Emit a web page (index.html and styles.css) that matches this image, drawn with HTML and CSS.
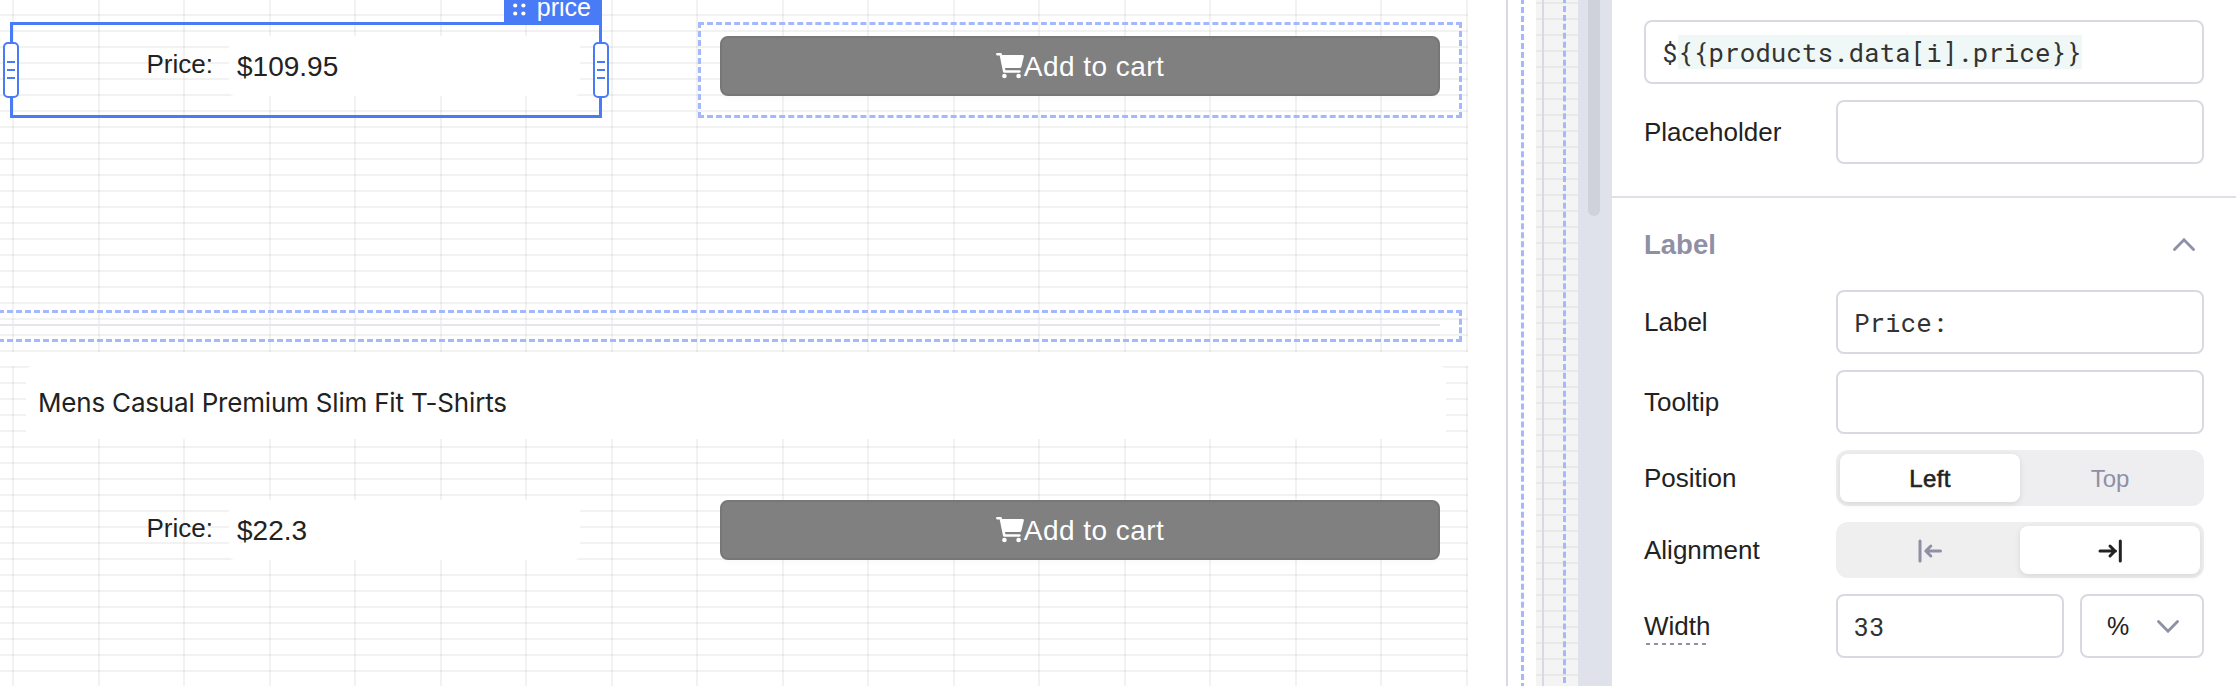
FILE: index.html
```html
<!DOCTYPE html>
<html lang="en">
<head>
<meta charset="utf-8">
<title>Editor</title>
<link rel="stylesheet" href="styles.css">
</head>
<body>
<div class="app">
  <main class="canvas">
    <div class="list">
      <section class="item item-a">
        <div class="widget selected">
          <span class="tag"><svg width="13" height="13" viewBox="0 0 13 13"><g fill="#fff"><circle cx="2.2" cy="2.5" r="2.1"/><circle cx="10.4" cy="2.5" r="2.1"/><circle cx="2.2" cy="10.5" r="2.1"/><circle cx="10.4" cy="10.5" r="2.1"/></g></svg><span>price</span></span>
          <span class="handle left"><i></i><i></i><i></i></span>
          <span class="handle right"><i></i><i></i><i></i></span>
          <span class="field-label">Price:</span>
          <span class="field-value">$109.95</span>
        </div>
        <div class="widget outlined">
          <button class="cart"><svg width="28" height="26" viewBox="0 0 28 26"><path fill="#fff" d="M1.2 0H4.6Q5.8 0 6 1.3L6.2 2H26.6Q28.2 2 27.8 3.7L25.4 13.7Q25.1 15 23.7 15H9L9.4 17.3H23.6Q24.8 17.5 24.8 18.6T23.6 19.8H8.2Q7.2 19.8 7 18.7L3.7 2.5H1.2Q0 2.3 0 1.2T1.2 0Z"/><circle cx="8.4" cy="23" r="2.3" fill="#fff"/><circle cx="22.6" cy="23" r="2.3" fill="#fff"/></svg><span>Add to cart</span></button>
        </div>
        <div class="rule"><div class="rule-line"></div></div>
      </section>
      <section class="item item-b">
        <div class="text-widget">Mens Casual Premium Slim Fit T-Shirts</div>
        <div class="item-row">
          <div class="widget plain">
            <span class="field-label">Price:</span>
            <span class="field-value">$22.3</span>
          </div>
          <div class="widget plain-button">
            <button class="cart"><svg width="28" height="26" viewBox="0 0 28 26"><path fill="#fff" d="M1.2 0H4.6Q5.8 0 6 1.3L6.2 2H26.6Q28.2 2 27.8 3.7L25.4 13.7Q25.1 15 23.7 15H9L9.4 17.3H23.6Q24.8 17.5 24.8 18.6T23.6 19.8H8.2Q7.2 19.8 7 18.7L3.7 2.5H1.2Q0 2.3 0 1.2T1.2 0Z"/><circle cx="8.4" cy="23" r="2.3" fill="#fff"/><circle cx="22.6" cy="23" r="2.3" fill="#fff"/></svg><span>Add to cart</span></button>
          </div>
        </div>
      </section>
    </div>
    <div class="list-edge"></div>
    <div class="page-edge"></div>
    <div class="gutter"><div class="thumb"></div></div>
  </main>
  <aside class="panel">
    <section class="group first">
      <div class="cut-label">Default value</div>
      <div class="input code">$<mark>{{products.data[i].price}}</mark></div>
      <div class="row"><label>Placeholder</label><div class="input"></div></div>
    </section>
    <section class="group">
      <header class="head"><h2>Label</h2><svg width="22" height="13" viewBox="0 0 22 13"><path d="M1.5 11.5L11 1.8L20.5 11.5" fill="none" stroke="#8f90a6" stroke-width="2.8" stroke-linecap="round"/></svg></header>
      <div class="row"><label>Label</label><div class="input code">Price:</div></div>
      <div class="row"><label>Tooltip</label><div class="input"></div></div>
      <div class="row"><label>Position</label><div class="segment"><span class="on">Left</span><span>Top</span></div></div>
      <div class="row"><label>Alignment</label><div class="segment neutral"><span><svg width="24" height="24" viewBox="0 0 24 24"><path d="M2 2V22M22.5 12H8M12.8 7L7.8 12L12.8 17" fill="none" stroke="#8f90a6" stroke-width="3" stroke-linecap="round" stroke-linejoin="round"/></svg></span><span class="on"><svg width="24" height="24" viewBox="0 0 24 24"><path d="M22.3 2V22M2 12H17.5M12 7L17 12L12 17" fill="none" stroke="#222" stroke-width="3" stroke-linecap="round" stroke-linejoin="round"/></svg></span></div></div>
      <div class="row"><label><span class="hint">Width</span></label><div class="input code">33</div><div class="input unit"><span>%</span><svg width="22" height="13" viewBox="0 0 22 13"><path d="M1.5 1.5L11 11.2L20.5 1.5" fill="none" stroke="#8f90a6" stroke-width="2.8" stroke-linecap="round"/></svg></div></div>
    </section>
  </aside>
</div>
</body>
</html>
```
FILE: styles.css
```css
* { box-sizing: border-box; }
body { margin: 0; background: #fff; color: #222; font-family: "Liberation Sans", Arial, sans-serif; font-size: 26px; }
.app { display: flex; width: 2236px; height: 686px; overflow: hidden; }
.canvas { display: flex; flex: 0 0 1612px; height: 686px; }
.list { width: 1508px; border-right: 2px solid #d9d9e1; }
.item {
  width: 1468px;
  background-image:
    repeating-linear-gradient(to right, rgba(0,0,0,.05) 0 2px, transparent 2px 85.53px),
    repeating-linear-gradient(to bottom, rgba(0,0,0,.05) 0 2px, transparent 2px 16px);
}
.item-a { height: 352px; background-position: 12px 0, 0 -2px; background-size: 1456px 352px, 1468px 368px; background-repeat: no-repeat; padding-top: 22px; display: grid; grid-template-columns: 592px 764px; grid-template-rows: 96px 32px; column-gap: 96px; row-gap: 192px; padding-left: 10px; }
.item-b { height: 320px; margin-top: 14px; background-position: 12px 0, 0 0; background-size: 1456px 320px, 1468px 320px; background-repeat: no-repeat; }
.widget { position: relative; height: 96px; display: flex; }
.selected { border: 3px solid #4a7bf7; padding: 11px 19px 19px 0; }
.tag { position: absolute; right: -3px; top: -32px; width: 98px; height: 29px; background: #4a7bf7; color: #fff; display: flex; align-items: center; justify-content: flex-end; gap: 11px; padding: 0 11px 1px 0; font-size: 25px; line-height: 26px; }
.tag svg { margin-top: 4px; }
.handle { position: absolute; top: 17px; width: 16px; height: 56px; border: 2px solid #4a7bf7; border-radius: 5px; background: #fff; display: flex; flex-direction: column; gap: 6px; align-items: center; padding-top: 17px; }
.handle i { width: 8px; height: 2px; background: #4a7bf7; }
.handle.left { left: -10px; }
.handle.right { right: -10px; }
.field-label { width: 200px; text-align: right; line-height: 30px; padding-top: 13px; }
.field-value { margin-left: 16px; flex: 1; height: 60px; background: #fff; border-radius: 6px; font-size: 28px; line-height: 62px; padding-left: 8px; }
.outlined { border: 3px dashed #a3b9fb; padding: 11px 19px; }
.cart { width: 100%; height: 60px; padding: 0; border: 2px solid #777; border-radius: 8px; background: #808080; color: #fff; box-shadow: 0 4px 2px rgba(0,0,0,.015); font: 28px "Liberation Sans", Arial, sans-serif; letter-spacing: .45px; display: flex; align-items: center; justify-content: center; }
.cart span { padding-top: 2px; }
.rule { grid-column: 1 / 3; margin-left: -30px; border: 3px dashed #a3b9fb; padding: 11px 19px 0 0; }
.rule-line { height: 2px; background: #e4e5ee; }
.text-widget { margin-left: 26px; width: 1420px; height: 73px; background: #fff; border-radius: 6px 6px 0 0; padding-left: 12px; font: 26px/74px Inter, sans-serif; letter-spacing: -.19px; }
.item-row { display: flex; gap: 96px; padding: 47px 0 0 10px; }
.plain { width: 592px; padding: 14px 22px 22px 3px; }
.plain-button { width: 764px; padding: 14px 22px; }
.list-edge { width: 28px; padding-left: 13px; }
.list-edge::before { content: ""; display: block; width: 3px; height: 700px; margin-top: -2px; border-left: 3px dashed #a3b9fb; }
.page-edge { width: 42px; display: flex; padding-left: 6px; background: repeating-linear-gradient(to bottom, #f4f4f4 0 2px, #e8e8e8 2px 4px, #f4f4f4 4px 16px); }
.page-edge::before { content: ""; width: 2px; background: #d9d9e1; }
.page-edge::after { content: ""; margin-left: 19px; height: 704px; margin-top: -3px; border-left: 3px dashed #a3b9fb; }
.gutter { width: 34px; background: #dfe2eb; padding-left: 10px; }
.thumb { width: 12px; height: 216px; background: #cfd2db; border-radius: 0 0 6px 6px; }
.panel { width: 624px; }
.group { padding: 0 32px; display: flex; flex-direction: column; gap: 16px; }
.first { height: 198px; border-bottom: 2px solid #dfe1ea; gap: 0; }
.cut-label { flex: none; height: 30px; line-height: 30px; margin-top: -24px; margin-bottom: 14px; }
.row { display: flex; align-items: center; }
.first .row { margin-top: 16px; }
label { width: 192px; flex: none; line-height: 30px; }
.input { flex: 1; height: 64px; border: 2px solid #d9d9e1; border-radius: 8px; background: #fff; }
.first > .input { flex: none; }
.code { color: #333; font: 25.9px/34px "Roboto Mono", "DejaVu Sans Mono", monospace; padding: 13px 16px; white-space: nowrap; }
mark { display: inline-block; background: #eff8f6; color: inherit; }
.head { height: 76px; display: flex; align-items: center; justify-content: space-between; padding: 17px 9px 0 0; }
h2 { margin: 0; font-size: 27.5px; line-height: 32px; color: #8f90a6; }
.segment { flex: 1; display: flex; height: 56px; padding: 4px; border-radius: 12px; background: #eeeef0; font-size: 24px; color: #8f90a6; }
.segment.neutral { background: #efefef; }
.segment span { flex: 1; display: flex; align-items: center; justify-content: center; padding-top: 1px; border-radius: 8px; }
.segment .on { background: #fff; color: #222; -webkit-text-stroke: .6px #222; letter-spacing: .4px; box-shadow: 0 2px 6px rgba(0,0,0,.1); }
.hint { display: inline-block; padding-bottom: 4px; margin-bottom: -4px; background: repeating-linear-gradient(to right, #8f90a6 0 4px, transparent 4px 8px) 2px 100% / 100% 2px no-repeat; }
.unit { flex: 0 0 124px; margin-left: 16px; display: flex; align-items: center; justify-content: space-between; padding: 0 23px 0 25px; font-size: 25px; }
```
